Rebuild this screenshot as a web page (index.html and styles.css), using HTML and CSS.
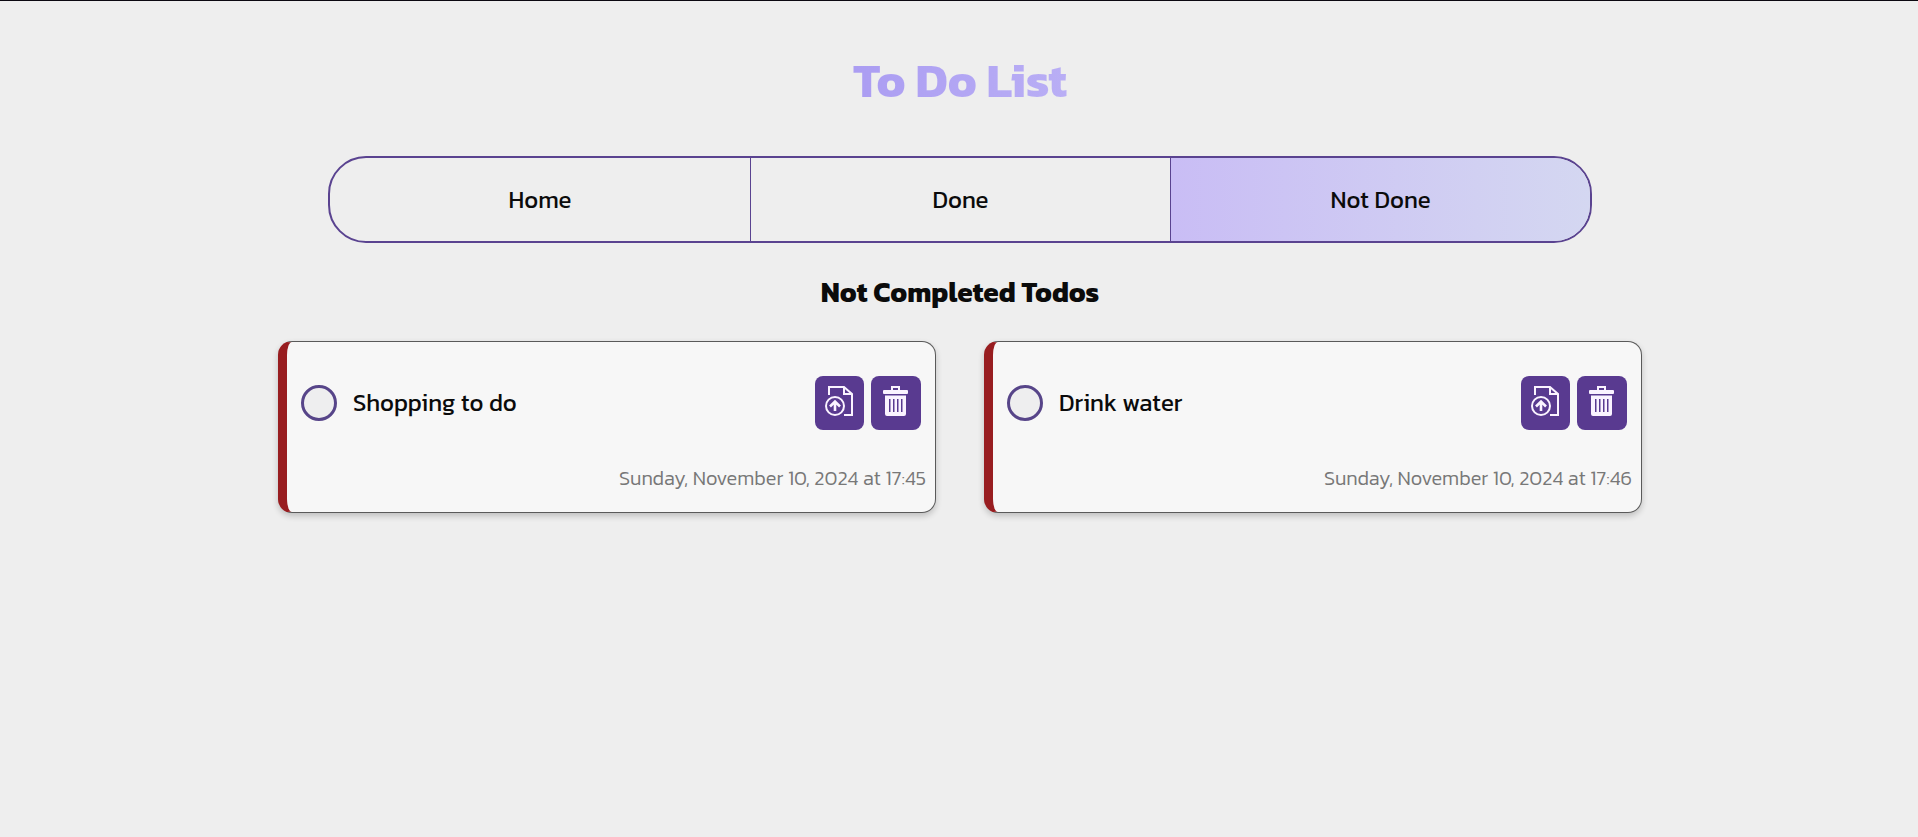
FILE: index.html
```
<!DOCTYPE html>
<html lang="en">
<head>
<meta charset="utf-8">
<meta name="viewport" content="width=device-width, initial-scale=1">
<title>To Do List</title>
<link rel="stylesheet" href="styles.css">
</head>
<body>
<svg class="sprite" aria-hidden="true">
  <symbol id="icon-upload" viewBox="0 0 28 30">
    <path d="M4 9V1h15l8 7v21h-8" fill="none" stroke="currentColor" stroke-width="2"/>
    <path d="M19 1v7h8" fill="none" stroke="currentColor" stroke-width="2"/>
    <circle cx="10" cy="20" r="9" fill="none" stroke="currentColor" stroke-width="2"/>
    <path d="M10 25V16M5 20.500L10 15.500l5 5" fill="none" stroke="currentColor" stroke-width="2.600"/>
  </symbol>
  <symbol id="icon-trash" viewBox="0 0 25 30">
    <path d="M9 5V1h7v4" fill="none" stroke="currentColor" stroke-width="2"/>
    <rect x="0" y="4" width="25" height="4" rx="1" fill="currentColor"/>
    <path fill="currentColor" fill-rule="evenodd" d="M2 9.500h21V28q0 2-2 2H4q-2 0-2-2zM6 13v13h1.500V13zM10 13v13h1.500V13zM14 13v13h1.500V13zM18 13v13h1.500V13z"/>
  </symbol>
</svg>
<main class="page">
  <h1 class="title"><span class="title-text">To Do List</span></h1>
  <nav class="tabs">
    <a class="tab" href="#home">Home</a>
    <a class="tab" href="#done">Done</a>
    <a class="tab tab-active" href="#not-done" aria-current="page">Not Done</a>
  </nav>
  <h2 class="subtitle">Not Completed Todos</h2>
  <ul class="todos">
    <li class="todo">
      <div class="todo-row">
        <input class="todo-check" type="checkbox" id="todo-1">
        <label class="todo-label" for="todo-1">Shopping to do</label>
        <button class="todo-button todo-update" type="button" aria-label="Update"><svg class="icon-upload"><use href="#icon-upload"/></svg></button>
        <button class="todo-button" type="button" aria-label="Delete"><svg class="icon-trash"><use href="#icon-trash"/></svg></button>
      </div>
      <time class="todo-date" datetime="2024-11-10T17:45">Sunday, November 10, 2024 at 17:45</time>
    </li>
    <li class="todo">
      <div class="todo-row">
        <input class="todo-check" type="checkbox" id="todo-2">
        <label class="todo-label" for="todo-2">Drink water</label>
        <button class="todo-button todo-update" type="button" aria-label="Update"><svg class="icon-upload"><use href="#icon-upload"/></svg></button>
        <button class="todo-button" type="button" aria-label="Delete"><svg class="icon-trash"><use href="#icon-trash"/></svg></button>
      </div>
      <time class="todo-date" datetime="2024-11-10T17:46">Sunday, November 10, 2024 at 17:46</time>
    </li>
  </ul>
</main>
</body>
</html>
```
FILE: styles.css
```
* {
  box-sizing: border-box;
}

body {
  margin: 0;
  min-height: 100vh;
  border-top: 1px solid #0b0810;
  background: #eeeeee;
  color: #0b0b0b;
  font-family: Kanit, "Noto Sans", sans-serif;
}

.sprite {
  display: none;
}

.page {
  display: flex;
  flex-direction: column;
  align-items: center;
  padding: 47px 14px 48px 16px;
}

.title {
  margin: 0 0 44px;
  font-size: 48px;
  line-height: 64px;
  font-weight: 700;
}

.title-text {
  background: linear-gradient(90deg, #ab9df2, #b9aef5);
  background-clip: text;
  -webkit-background-clip: text;
  color: transparent;
}

.tabs {
  display: grid;
  grid-template-columns: repeat(3, 1fr);
  width: 100%;
  max-width: 1264px;
  border: 2px solid #5a4390;
  border-radius: 38px;
  overflow: hidden;
}

.tab {
  padding: 24px;
  color: inherit;
  font-size: 24px;
  line-height: 35px;
  font-weight: 400;
  text-align: center;
  text-decoration: none;
}

.tab + .tab {
  border-left: 1px solid #5a4390;
}

.tab-active {
  background: linear-gradient(90deg, #c9bdf5, #d4d7f1);
}

.subtitle {
  margin: 29px 0;
  font-size: 28px;
  line-height: 40px;
  font-weight: 700;
}

.todos {
  display: grid;
  grid-template-columns: repeat(auto-fit, minmax(min(100%, 480px), 1fr));
  gap: 48px;
  width: 100%;
  max-width: 1364px;
  margin: 0;
  padding: 0;
  list-style: none;
}

.todo {
  display: flex;
  flex-direction: column;
  gap: 34px;
  padding: 34px 9px 20px 14px;
  border: 1px solid #5a5a5a;
  border-left: 9px solid #981d20;
  border-radius: 14px;
  background: #f7f7f7;
  box-shadow: 0 3px 6px rgba(0, 0, 0, 0.2);
}

.todo-row {
  display: flex;
  align-items: center;
  gap: 7px;
  padding-right: 5px;
}

.todo-check {
  appearance: none;
  flex: none;
  width: 36px;
  height: 36px;
  margin: 0;
  border: 3px solid #574589;
  border-radius: 50%;
  background: #eeeeef;
}

.todo-check:checked {
  background: #574589;
}

.todo-label {
  flex: 1;
  padding-left: 9px;
  font-size: 24px;
  line-height: 36px;
  font-weight: 400;
}

.todo-button {
  display: flex;
  justify-content: center;
  width: 50px;
  height: 54px;
  padding: 10px 2px 10px 0;
  border: 0;
  border-radius: 8px;
  background: #593a90;
  color: #faf3ff;
  cursor: pointer;
}

.todo-update {
  width: 49px;
}

.icon-upload {
  width: 28px;
  height: 30px;
}

.icon-trash {
  width: 25px;
  height: 30px;
}

.todo-date {
  align-self: flex-end;
  color: #787878;
  font-size: 20px;
  line-height: 28px;
  font-weight: 300;
}
```
